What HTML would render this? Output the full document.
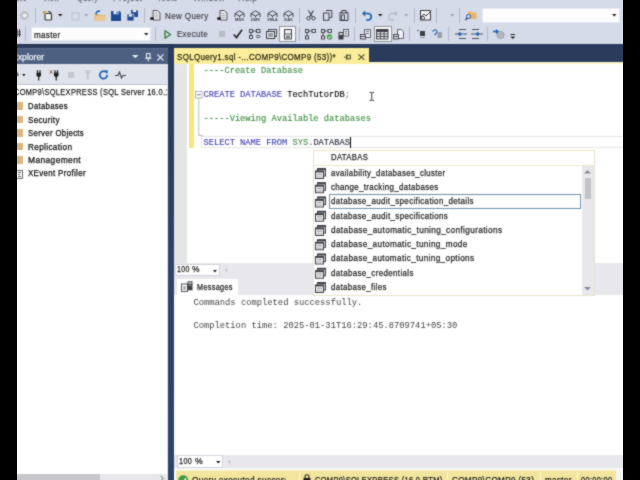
<!DOCTYPE html>
<html><head><meta charset="utf-8">
<style>
*{margin:0;padding:0;box-sizing:border-box}
html,body{width:640px;height:480px;overflow:hidden;background:#fff}
body{position:relative;font-family:"Liberation Sans",sans-serif;font-size:8.6px;color:#1e1e1e}
.a{position:absolute}
.t{position:absolute;white-space:pre;line-height:1;-webkit-text-stroke:0.25px currentColor}
.m{position:absolute;white-space:pre;line-height:1;font-family:"Liberation Mono",monospace}
svg{position:absolute;overflow:visible}
.sep{position:absolute;width:1px;background:#b2b9c7}
#root{position:absolute;left:0;top:0;width:640px;height:480px;overflow:hidden;filter:url(#sb)}
</style></head><body><svg width="0" height="0" style="position:absolute"><filter id="sb" x="0" y="0" width="100%" height="100%" color-interpolation-filters="sRGB"><feConvolveMatrix order="3" kernelMatrix="1 2 1 2 12 2 1 2 1" divisor="24" edgeMode="duplicate"/></filter></svg><div id="root">

<!-- ===== TOOLBAR ===== -->
<div class="a" style="left:0;top:0;width:640px;height:44px;background:#d6dbe9"></div>
<!-- menu remnants -->
<div id="menu"></div>

<!-- row1 -->
<div id="tb1">
<!-- nav forward (disabled) -->
<svg style="left:20px;top:11px" width="9" height="9"><circle cx="4.5" cy="4.5" r="4.2" fill="#b4b8c0"/><circle cx="4.5" cy="4.5" r="2.6" fill="#d2d6de"/><path d="M2.5 4.5h3.5M4.5 3l1.5 1.5L4.5 6" fill="none" stroke="#f4f5f8" stroke-width="1.1"/></svg>
<div class="sep" style="left:35px;top:8px;height:15px"></div>
<!-- new project -->
<svg style="left:42px;top:10px" width="11" height="11"><rect x="3" y="3.5" width="6.5" height="6.5" fill="#eef0f4" stroke="#3a3a3a" stroke-width="1.2" rx="1"/><path d="M6 1.5c1.5 0 3 1 3 2.5" fill="none" stroke="#3a3a3a" stroke-width="1.2"/><circle cx="2.5" cy="2.5" r="1.8" fill="#c9a94a"/></svg>
<svg style="left:58px;top:14px" width="5" height="3"><path d="M0 0h4.5L2.25 2.5z" fill="#1e1e1e"/></svg>
<!-- add item disabled -->
<svg style="left:71px;top:11px" width="9" height="10"><rect x="1" y="2" width="7" height="7" fill="none" stroke="#b9bdc5" stroke-width="1"/><path d="M0 1h3" stroke="#c8ccd4"/></svg>
<svg style="left:84px;top:14px" width="5" height="3"><path d="M0 0h4.5L2.25 2.5z" fill="#a3a7af"/></svg>
<!-- open -->
<svg style="left:94px;top:10px" width="12" height="11"><path d="M0.5 4h4l1 1h6v5.5h-11z" fill="#dfb56e"/><path d="M0.5 6h11v4.5h-11z" fill="#ebc98c"/><path d="M2 4.5c0-2.5 1.5-3.5 3.5-3.5" fill="none" stroke="#1b61b5" stroke-width="1.4"/><path d="M4.5 0l2 1-2 1.3z" fill="#1b61b5"/></svg>
<!-- save -->
<svg style="left:111px;top:11px" width="10" height="10"><path d="M0 0h8.5l1.5 1.5v8.5h-10z" fill="#1f4a92"/><rect x="2.5" y="0" width="5" height="3.2" fill="#e8ecf5"/><rect x="5.3" y="0.6" width="1.2" height="2" fill="#1f4a92"/></svg>
<!-- save all -->
<svg style="left:127px;top:10px" width="11" height="11"><path d="M4 0h6l1 1v6h-7z" fill="#1f4a92"/><rect x="5.8" y="0" width="3.4" height="2.2" fill="#e8ecf5"/><path d="M0 4h6l1 1v6h-7z" fill="#1f4a92" stroke="#d6dbe9" stroke-width="0.8"/><rect x="1.8" y="4.4" width="3.4" height="2.2" fill="#e8ecf5"/></svg>
<div class="sep" style="left:144px;top:8px;height:15px"></div>
<!-- new query -->
<svg style="left:150px;top:10px" width="11" height="11"><path d="M3 0.5h4.5l2.5 2.5v7h-7z" fill="#e9ebef" stroke="#55575c" stroke-width="1"/><path d="M4.5 3h3M4.5 5h4M4.5 7h4" stroke="#9a9ca2" stroke-width="0.8"/><ellipse cx="2" cy="8.5" rx="2" ry="1.6" fill="#1e1e1e"/></svg>
<!-- query doc -->
<svg style="left:217px;top:10px" width="11" height="11"><path d="M3 0.5h4.5l2.5 2.5v7h-7z" fill="#e9ebef" stroke="#55575c" stroke-width="1"/><path d="M4.5 3.5h3M4.5 5.5h4M4.5 7.5h4" stroke="#9a9ca2" stroke-width="0.8"/><ellipse cx="2" cy="8.5" rx="2" ry="1.6" fill="#1e1e1e"/></svg>
<!-- MDX DMX XMLA DAX cube icons -->
<svg style="left:234px;top:10px" width="11" height="11"><path d="M1 3.5L5.5 0.8 10 3.5v3.5M1 3.5v3.5M1 3.5l4.5 2.5L10 3.5M5.5 6v1.5" fill="none" stroke="#3f4247" stroke-width="1"/><text x="5.5" y="10.8" font-size="4" font-family="Liberation Sans" font-weight="bold" text-anchor="middle" fill="#3a3d42">MDX</text></svg>
<svg style="left:250px;top:10px" width="11" height="11"><path d="M1 3.5L5.5 0.8 10 3.5v3.5M1 3.5v3.5M1 3.5l4.5 2.5L10 3.5M5.5 6v1.5" fill="none" stroke="#3f4247" stroke-width="1"/><text x="5.5" y="10.8" font-size="4" font-family="Liberation Sans" font-weight="bold" text-anchor="middle" fill="#3a3d42">DMX</text></svg>
<svg style="left:267px;top:10px" width="11" height="11"><path d="M1 3.5L5.5 0.8 10 3.5v3.5M1 3.5v3.5M1 3.5l4.5 2.5L10 3.5M5.5 6v1.5" fill="none" stroke="#3f4247" stroke-width="1"/><text x="5.5" y="10.8" font-size="3.7" font-family="Liberation Sans" font-weight="bold" text-anchor="middle" fill="#3a3d42">XMLA</text></svg>
<svg style="left:283px;top:10px" width="11" height="11"><path d="M1 3.5L5.5 0.8 10 3.5v3.5M1 3.5v3.5M1 3.5l4.5 2.5L10 3.5M5.5 6v1.5" fill="none" stroke="#3f4247" stroke-width="1"/><text x="5.5" y="10.8" font-size="4" font-family="Liberation Sans" font-weight="bold" text-anchor="middle" fill="#3a3d42">DAX</text></svg>
<div class="sep" style="left:299px;top:8px;height:15px"></div>
<!-- cut -->
<svg style="left:306px;top:10px" width="10" height="11"><path d="M2.5 0.5L6.5 7M7.5 0.5L3.5 7" stroke="#3c3f44" stroke-width="1.1" fill="none"/><circle cx="2.5" cy="8.3" r="1.7" fill="none" stroke="#3c3f44" stroke-width="1"/><circle cx="7.5" cy="8.3" r="1.7" fill="none" stroke="#3c3f44" stroke-width="1"/></svg>
<!-- copy -->
<svg style="left:323px;top:10px" width="10" height="11"><rect x="0.5" y="3" width="5.5" height="7.2" fill="none" stroke="#3c3f44" stroke-width="1"/><path d="M3 0.5h5.8v7h-2.3" fill="none" stroke="#3c3f44" stroke-width="1"/></svg>
<!-- paste -->
<svg style="left:339px;top:10px" width="10" height="11"><path d="M1 2.5h8v8h-8z" fill="none" stroke="#3c3f44" stroke-width="1"/><rect x="3" y="0.5" width="4" height="2.5" fill="#d6dbe9" stroke="#3c3f44" stroke-width="1"/><rect x="2.5" y="5" width="3" height="5" fill="none" stroke="#3c3f44" stroke-width="0.9"/></svg>
<div class="sep" style="left:355px;top:8px;height:15px"></div>
<!-- undo -->
<svg style="left:362px;top:10px" width="10" height="11"><path d="M2 3.5h4a3 3 0 0 1 0 6.5H4" fill="none" stroke="#1c5eae" stroke-width="1.6"/><path d="M0 3.5L3.2 0.5v6z" fill="#1c5eae"/></svg>
<svg style="left:378px;top:14px" width="5" height="3"><path d="M0 0h4.5L2.25 2.5z" fill="#1e1e1e"/></svg>
<!-- redo disabled -->
<svg style="left:388px;top:10px" width="10" height="11"><path d="M8 3.5H4a3 3 0 0 0 0 6.5h2" fill="none" stroke="#b8bcc4" stroke-width="1.4"/><path d="M10 3.5L6.8 0.5v6z" fill="#b8bcc4"/></svg>
<svg style="left:404px;top:14px" width="5" height="3"><path d="M0 0h4.5L2.25 2.5z" fill="#a3a7af"/></svg>
<div class="sep" style="left:414px;top:8px;height:15px"></div>
<!-- activity monitor -->
<svg style="left:420px;top:10px" width="11" height="11"><rect x="0.5" y="0.5" width="10" height="9.5" fill="#eef0f5" stroke="#3c3f44" stroke-width="1"/><path d="M1 7l3-3 2 2 4-4" fill="none" stroke="#3c3f44" stroke-width="1"/><circle cx="3" cy="8" r="1.6" fill="#eef0f5" stroke="#3c3f44" stroke-width="0.9"/></svg>
<div class="sep" style="left:436px;top:8px;height:15px"></div>
<svg style="left:450px;top:14px" width="5" height="3"><path d="M0 0h4.5L2.25 2.5z" fill="#9ea2aa"/></svg>
<div class="sep" style="left:459px;top:8px;height:15px"></div>
<!-- find in files -->
<svg style="left:465px;top:10px" width="12" height="11"><path d="M3 1.5h3.5l1 1h4v6.5h-8.5z" fill="#e7b564"/><circle cx="3.5" cy="6.5" r="2" fill="#d6e2f2" stroke="#1b4f94" stroke-width="1"/><path d="M2.2 8L0.5 10" stroke="#1b4f94" stroke-width="1.4"/></svg>
<!-- find combo -->
<div class="a" style="left:482px;top:8px;width:138px;height:15px;background:#fdfdfd;border:1px solid #e6e9f0"></div>
<svg style="left:612px;top:14px" width="5" height="3"><path d="M0 0h4.5L2.25 2.5z" fill="#1e1e1e"/></svg>
</div>
<!-- row2 -->
<div id="tb2">
<svg style="left:16px;top:28px" width="5" height="10"><path d="M1 1v8M3.5 1v8M0 4h5M0 6.5h5" stroke="#3c3f44" stroke-width="1"/></svg>
<div class="sep" style="left:25px;top:27px;height:14px"></div>
<!-- master combo -->
<div class="a" style="left:31px;top:27px;width:120px;height:14px;background:#fdfdfd;border:1px solid #e3e6ee"></div>
<svg style="left:143.5px;top:33px" width="5" height="3"><path d="M0 0h4.5L2.25 2.5z" fill="#1e1e1e"/></svg>
<div class="sep" style="left:155px;top:27px;height:14px"></div>
<!-- execute -->
<svg style="left:164px;top:30px" width="8" height="9"><path d="M1 0.8v7.4L6.6 4.5z" fill="none" stroke="#2f7a34" stroke-width="1.3" stroke-linejoin="round"/></svg>
<!-- stop disabled -->
<div class="a" style="left:219px;top:31px;width:6px;height:6px;background:#b7bbc4"></div>
<!-- parse check -->
<svg style="left:233px;top:29px" width="10" height="10"><path d="M0.8 5.5L3.5 8.5 9 0.8" fill="none" stroke="#2b2b2e" stroke-width="1.8"/></svg>
<!-- estimated plan -->
<svg style="left:249px;top:29px" width="12" height="10"><rect x="0.5" y="0.5" width="3" height="3" fill="none" stroke="#3c3f44" stroke-width="0.9"/><rect x="7.5" y="0.5" width="3.5" height="3" fill="none" stroke="#3c3f44" stroke-width="0.9"/><path d="M3.5 2h4M2 3.5v3" stroke="#3c3f44" stroke-width="0.9"/><rect x="0.5" y="6.5" width="3" height="3" fill="none" stroke="#3c3f44" stroke-width="0.9"/><ellipse cx="9.2" cy="7.5" rx="1.8" ry="1.2" fill="none" stroke="#3c3f44" stroke-width="0.9"/></svg>
<!-- results stack -->
<svg style="left:266px;top:29px" width="11" height="10"><rect x="2.5" y="0.5" width="8" height="7" fill="#d6dbe9" stroke="#3c3f44" stroke-width="0.9"/><rect x="0.5" y="2.5" width="8" height="7" fill="#e9ecf2" stroke="#3c3f44" stroke-width="1"/><path d="M2 5h5M2 7h5" stroke="#3c3f44" stroke-width="0.9"/></svg>
<!-- pressed button -->
<div class="a" style="left:279px;top:26px;width:17px;height:16px;background:#fbfcfd;border:1px solid #8e939c"></div>
<svg style="left:284px;top:29px" width="8" height="11"><rect x="0.5" y="0.5" width="7" height="9.5" fill="#eceef2" stroke="#3c3f44" stroke-width="1"/><path d="M0.5 5h7" stroke="#3c3f44" stroke-width="0.8"/><rect x="2" y="6.5" width="4" height="2.5" fill="#7a7d83"/></svg>
<div class="sep" style="left:299px;top:27px;height:14px"></div>
<!-- actual plan -->
<svg style="left:305px;top:29px" width="11" height="11"><rect x="0.5" y="0.5" width="3" height="3" fill="none" stroke="#3c3f44" stroke-width="0.9"/><rect x="7" y="0.5" width="3.5" height="3" fill="none" stroke="#3c3f44" stroke-width="0.9"/><path d="M3.5 2h3.5M2 3.5v3.5" stroke="#3c3f44" stroke-width="0.9"/><rect x="0.5" y="7" width="3" height="3" fill="none" stroke="#3c3f44" stroke-width="0.9"/></svg>
<!-- live stats -->
<svg style="left:321px;top:29px" width="12" height="11"><rect x="0.5" y="0.5" width="3" height="3" fill="none" stroke="#3c3f44" stroke-width="0.9"/><rect x="7" y="0.5" width="3.5" height="3" fill="none" stroke="#3c3f44" stroke-width="0.9"/><path d="M3.5 2h3.5M2 3.5v3.5" stroke="#3c3f44" stroke-width="0.9"/><rect x="0.5" y="7" width="3" height="3" fill="none" stroke="#3c3f44" stroke-width="0.9"/><circle cx="8.5" cy="8" r="2.8" fill="#4a9c4a"/><path d="M7 8l1.2 1.2 2-2.2" stroke="#fff" stroke-width="0.9" fill="none"/></svg>
<!-- client stats -->
<svg style="left:338px;top:29px" width="11" height="11"><rect x="0.5" y="3" width="5" height="7.5" fill="#3a3d42"/><rect x="1.5" y="4" width="3" height="2" fill="#d6dbe9"/><rect x="5.5" y="0.5" width="5" height="6.5" fill="#e6e9ef" stroke="#55585e" stroke-width="0.9"/><path d="M7 2.5h2M7 4.5h2" stroke="#55585e" stroke-width="0.8"/></svg>
<div class="sep" style="left:354px;top:27px;height:14px"></div>
<!-- results to text -->
<svg style="left:360px;top:29px" width="12" height="11"><path d="M4.5 0.5h6v8h-6z" fill="#e9ecf2" stroke="#55585e" stroke-width="0.9"/><path d="M6 2.5h3M6 4.5h3" stroke="#55585e" stroke-width="0.8"/><rect x="0.5" y="5.5" width="5" height="4.5" fill="#d6dbe9" stroke="#3c3f44" stroke-width="0.9"/><path d="M0.5 7.5h5" stroke="#3c3f44" stroke-width="0.8"/></svg>
<!-- pressed grid -->
<div class="a" style="left:374px;top:26px;width:18px;height:16px;background:#fbfcfd;border:1px solid #8e939c"></div>
<svg style="left:376px;top:29px" width="13" height="11"><rect x="0.5" y="0.5" width="11.5" height="9.5" fill="#eceef2" stroke="#3c3f44" stroke-width="1"/><rect x="0.5" y="0.5" width="11.5" height="2.5" fill="#3c3f44"/><path d="M0.5 5h11.5M0.5 7.5h11.5M4.3 3v7M8.1 3v7" stroke="#3c3f44" stroke-width="0.9"/></svg>
<!-- results to file -->
<svg style="left:393px;top:29px" width="12" height="11"><path d="M4.5 0.5h4l2 2v7h-6z" fill="#eef0f4" stroke="#55585e" stroke-width="0.9"/><rect x="0.5" y="5.5" width="5" height="4.5" fill="#d6dbe9" stroke="#3c3f44" stroke-width="0.9"/><path d="M0.5 7.5h5" stroke="#3c3f44" stroke-width="0.8"/></svg>
<div class="sep" style="left:409px;top:27px;height:14px"></div>
<!-- comment -->
<svg style="left:417px;top:29px" width="9" height="10"><path d="M0 1.5h2" stroke="#6b6e74" stroke-width="1"/><rect x="3" y="2" width="5" height="5" fill="#3c3f44"/><path d="M3 8.5h5" stroke="#9a9da3" stroke-width="1"/></svg>
<!-- uncomment -->
<svg style="left:432px;top:29px" width="11" height="10"><path d="M1 3a2 2 0 1 1 3 1.5L2.5 6" fill="none" stroke="#1c5eae" stroke-width="1.1"/><path d="M5.5 4h4.5M5.5 6h4.5M5.5 8h4.5" stroke="#55585e" stroke-width="0.9"/></svg>
<div class="sep" style="left:448px;top:27px;height:14px"></div>
<!-- decrease indent -->
<svg style="left:455px;top:29px" width="12" height="10"><path d="M4 0.5h7M0 5h3M8 5h4M4 9.5h7" stroke="#3c3f44" stroke-width="0.9"/><path d="M7.5 5H3.5M5.3 3.2L3.5 5l1.8 1.8" fill="none" stroke="#1c5eae" stroke-width="1.3"/></svg>
<!-- increase indent -->
<svg style="left:471px;top:29px" width="12" height="10"><path d="M1 0.5h7M0 5h3M8.5 5h3.5M1 9.5h7" stroke="#3c3f44" stroke-width="0.9"/><path d="M3.5 5h4.5M6.2 3.2L8 5 6.2 6.8" fill="none" stroke="#1c5eae" stroke-width="1.3"/></svg>
<div class="sep" style="left:487px;top:27px;height:14px"></div>
<!-- specify values -->
<svg style="left:493px;top:29px" width="12" height="11"><circle cx="7.5" cy="6" r="3.6" fill="#c5cad4" stroke="#8a8e96" stroke-width="0.9"/><circle cx="7.5" cy="6" r="1.5" fill="none" stroke="#8a8e96" stroke-width="0.8"/><path d="M0 2.5h4.5M3 0.8L5 2.5 3 4.2" fill="none" stroke="#1c5eae" stroke-width="1.3"/></svg>
<svg style="left:510px;top:34px" width="6" height="6"><path d="M0.5 0.5h4.5" stroke="#1e1e1e" stroke-width="0.9"/><path d="M0.3 2.5h5L2.8 5z" fill="#1e1e1e"/></svg>
</div>

<!-- navy env background -->
<div class="a" style="left:0;top:44px;width:640px;height:4px;background:#2a3b5c"></div>
<div class="a" style="left:0;top:44px;width:640px;height:1px;background:#222e4a"></div>

<!-- ===== EXPLORER ===== -->
<div id="explorer">
<div class="a" style="left:0;top:48px;width:168px;height:432px;background:#fff"></div>
<div class="a" style="left:0;top:48px;width:169px;height:16px;background:#4d6082"></div>
<div class="a" style="left:0;top:48px;width:168px;height:1px;background:#5e6f90"></div>
<div class="a" style="left:0;top:64px;width:168px;height:20px;background:#dfe3ec"></div>
<div class="a" style="left:0;top:84px;width:168px;height:1px;background:#bcc3cf"></div>
<div class="a" style="left:167px;top:84px;width:1px;height:396px;background:#e3e6ec"></div>
</div>

<!-- navy vertical gap -->
<div class="a" style="left:168px;top:48px;width:6px;height:432px;background:linear-gradient(#2a3b5c,#2c4266 50%,#2c4468)"></div>

<!-- ===== EDITOR ===== -->
<div id="editor">
<div class="a" style="left:174px;top:44px;width:466px;height:18px;background:#2a3b5c"></div>
<div class="a" style="left:174px;top:62px;width:466px;height:2px;background:#fff6c4"></div>
<div class="a" style="left:174px;top:48px;width:195px;height:16px;background:#fbed9c"></div>
<div class="a" style="left:174px;top:64px;width:466px;height:199px;background:#fff"></div>
<div class="a" style="left:174px;top:64px;width:13px;height:199px;background:#e4e6e6"></div>
<div class="a" style="left:188.5px;top:64px;width:5px;height:84px;background:#f6e584"></div>
</div>

<!-- ===== RESULTS ===== -->
<div id="results">
<div class="a" style="left:174px;top:263px;width:466px;height:16px;background:#e8e8ec"></div>
<div class="a" style="left:174px;top:279px;width:466px;height:16px;background:#e8e8ec"></div>
<div class="a" style="left:177px;top:279px;width:61px;height:17px;background:#fff"></div>
<div class="a" style="left:174px;top:295px;width:466px;height:160px;background:#fff"></div>
<div class="a" style="left:174px;top:455px;width:466px;height:13px;background:#e8e8ec"></div>
<div class="a" style="left:176px;top:470px;width:440px;height:10px;background:linear-gradient(#f8f0c4 0,#f8f0c4 1px,#f2e59e 1px)"></div>
</div>

<!-- explorer header icons -->
<svg style="left:132px;top:55px" width="7" height="4"><path d="M0 0h6.6L3.3 3.2z" fill="#e6eaf2"/></svg>
<svg style="left:144.5px;top:53px" width="7" height="9"><path d="M1.5 0.5h3.5v4.5h-3.5z" fill="none" stroke="#e6eaf2" stroke-width="1.1"/><path d="M0 5.3h6.5M3.25 5.3v3.2" stroke="#e6eaf2" stroke-width="1.1"/></svg>
<svg style="left:157px;top:53.5px" width="7" height="7"><path d="M0.3 0.3l6.2 6.2M6.5 0.3L0.3 6.5" stroke="#e6eaf2" stroke-width="1.2"/></svg>

<!-- explorer toolbar icons -->
<svg style="left:16px;top:70px" width="4" height="10"><path d="M0 1l2 3-2 3M1 5h2" stroke="#3c3f44" stroke-width="1" fill="none"/></svg>
<svg style="left:22px;top:73.5px" width="4" height="3"><path d="M0 0h3.6L1.8 2.2z" fill="#1e1e1e"/></svg>
<svg style="left:35.5px;top:69.5px" width="6" height="11"><path d="M1.5 0.3v2.4M4 0.3v2.4" stroke="#1e1e1e" stroke-width="1.2"/><path d="M0.5 2.6h4.5v3L3.6 7H1.9L0.5 5.6z" fill="#1e1e1e"/><path d="M2.75 6.5v4" stroke="#1e1e1e" stroke-width="1.2"/></svg>
<svg style="left:48.5px;top:69.5px" width="11" height="11"><path d="M0.5 0.5l3.2 3M3.7 0.5L0.5 3.5" stroke="#8a5a3a" stroke-width="0.9"/><path d="M6 0.3v2.4M8.5 0.3v2.4" stroke="#1e1e1e" stroke-width="1.2"/><path d="M5 2.6h4.5v3L8.1 7H6.4L5 5.6z" fill="#1e1e1e"/><path d="M7.25 6.5v4" stroke="#1e1e1e" stroke-width="1.2"/></svg>
<div class="a" style="left:68px;top:72px;width:6px;height:6px;background:#c3c7cf"></div>
<svg style="left:83.5px;top:70px" width="8" height="10"><path d="M0 0.5h7.5L4.8 4v5.5H2.7V4z" fill="#c3c7cf"/></svg>
<svg style="left:99px;top:70px" width="10" height="10"><path d="M8.2 5a3.7 3.7 0 1 1-1.6-3.1" fill="none" stroke="#1c5eae" stroke-width="1.7"/><path d="M5 0.2L9 0.4 8.2 4.3z" fill="#1c5eae"/></svg>
<svg style="left:115px;top:71px" width="11" height="8"><path d="M0 4.5h3l1.5-3.5 2 6 1.5-2.5h3" fill="none" stroke="#3c3f44" stroke-width="1.1"/></svg>

<!-- tree icons -->
<div class="a" style="left:0;top:102px;width:23px;height:7.5px;background:#dcb67a"></div>
<div class="a" style="left:0;top:115.5px;width:23px;height:7.5px;background:#dcb67a"></div>
<div class="a" style="left:0;top:129px;width:23px;height:7.5px;background:#dcb67a"></div>
<div class="a" style="left:0;top:142.5px;width:23px;height:7.5px;background:#dcb67a"></div>
<div class="a" style="left:0;top:156px;width:23px;height:7.5px;background:#dcb67a"></div>
<svg style="left:14px;top:169.5px" width="9" height="9"><rect x="0.5" y="0.5" width="8" height="8" fill="#fff" stroke="#55585e" stroke-width="0.9"/><path d="M4 2.5h3M4 4.5h2M4 6.5h3" stroke="#3c3f44" stroke-width="0.8"/></svg>

<!-- explorer bottom scrollbar -->
<div class="a" style="left:0;top:474px;width:167px;height:6px;background:#e8e8ec"></div>
<div class="a" style="left:0;top:474px;width:100px;height:6px;background:#c6c6cc"></div>
<svg style="left:160px;top:476px" width="4" height="5"><path d="M0.5 0l3 2.5-3 2.5" fill="none" stroke="#707074" stroke-width="1"/></svg>

<!-- editor tab pin / close -->
<svg style="left:344px;top:54px" width="7" height="6"><path d="M0 3.2h2.2" stroke="#4a4628" stroke-width="0.9"/><rect x="2.9" y="1.2" width="3.4" height="3.6" fill="none" stroke="#4a4628" stroke-width="1"/><path d="M2.6 0.5v5.4" stroke="#4a4628" stroke-width="0.9"/></svg>
<svg style="left:358px;top:53.5px" width="7" height="6"><path d="M0.4 0.3l6 5.6M6.4 0.3l-6 5.6" stroke="#4a4628" stroke-width="1.1"/></svg>

<!-- fold margin -->
<svg style="left:194.5px;top:91px" width="9" height="46"><rect x="0.5" y="0.5" width="6.5" height="6.5" fill="#fff" stroke="#a8a8a8" stroke-width="0.9"/><path d="M2 3.75h3.5" stroke="#606060" stroke-width="0.9"/><path d="M3.75 7v37.5h4" fill="none" stroke="#b4b4b4" stroke-width="0.9"/></svg>

<!-- current line highlight -->
<div class="a" style="left:201px;top:136px;width:422px;height:12px;border:1px solid #e4e4e4;border-right:none"></div>

<!-- text caret -->
<div class="a" style="left:350px;top:137px;width:1px;height:11px;background:#000"></div>

<!-- I-beam mouse cursor -->
<svg style="left:368.5px;top:91.5px" width="6" height="10"><path d="M0.5 0.5h1.5l0.75 0.6 0.75-0.6h1.5M0.5 8.5h1.5l0.75-0.6 0.75 0.6h1.5M2.75 1v7" fill="none" stroke="#222" stroke-width="0.9"/></svg>

<!-- ===== autocomplete popup ===== -->
<div class="a" style="left:313px;top:150px;width:282px;height:145.5px;background:#fff;border:1px solid #e9e3c8"></div>
<div class="a" style="left:314px;top:165px;width:280px;height:1px;background:#ece7d0"></div>
<!-- scrollbar -->
<div class="a" style="left:582px;top:166px;width:12px;height:128.5px;background:#e8e8ec"></div>
<svg style="left:584px;top:170px" width="8" height="4"><path d="M0 3.5L3.5 0 7 3.5z" fill="#868999"/></svg>
<div class="a" style="left:585px;top:178px;width:6px;height:21px;background:#c2c3c9"></div>
<svg style="left:584px;top:286.5px" width="8" height="4"><path d="M0 0h7L3.5 3.5z" fill="#868999"/></svg>
<!-- selection -->
<div class="a" style="left:329px;top:194px;width:252px;height:14.5px;border:1px solid #6d8fa9"></div>
<!-- item icons -->
<svg style="left:315px;top:168px" width="11" height="125">
<defs><g id="tic"><rect x="2.5" y="0.5" width="8" height="7.5" fill="#cfcfd2" stroke="#3c3f44" stroke-width="1"/><rect x="2.5" y="0.3" width="8" height="1.6" fill="#3c3f44"/><rect x="0.5" y="3" width="8" height="7.5" fill="#f6f6f6" stroke="#3c3f44" stroke-width="1"/><rect x="0.5" y="2.8" width="8" height="1.6" fill="#3c3f44"/><path d="M2 6.2h5" stroke="#8d8f94" stroke-width="1"/><rect x="1.3" y="7.6" width="6.4" height="2.2" fill="#c9cacd"/></g></defs>
<use href="#tic" y="0"/><use href="#tic" y="14.25"/><use href="#tic" y="28.5"/><use href="#tic" y="42.75"/><use href="#tic" y="57"/><use href="#tic" y="71.25"/><use href="#tic" y="85.5"/><use href="#tic" y="99.75"/><use href="#tic" y="114"/>
</svg>

<!-- ===== results area ===== -->
<div class="a" style="left:175px;top:263.5px;width:45px;height:12px;background:#fff;border:1px solid #d0d2d8"></div>
<svg style="left:213px;top:269.5px" width="5" height="3"><path d="M0 0h4L2 2.5z" fill="#1e1e1e"/></svg>
<svg style="left:224px;top:267px" width="4" height="6"><path d="M3.5 0L0.5 3l3 3z" fill="#c9c9cf"/></svg>
<svg style="left:180.5px;top:281px" width="12" height="11"><rect x="0.5" y="3" width="6" height="7.5" fill="#fff" stroke="#3c3f44" stroke-width="0.9"/><path d="M2 6h3M2 8h3" stroke="#3c3f44" stroke-width="0.8"/><rect x="6.5" y="0.3" width="5" height="9" fill="#3c3f44"/><rect x="7.5" y="1.3" width="3" height="1.5" fill="#d7d9de"/><rect x="7.5" y="3.8" width="3" height="1.2" fill="#8b8e95"/></svg>

<div class="a" style="left:177px;top:455px;width:46px;height:12.5px;background:#fff;border:1px solid #d0d2d8"></div>
<svg style="left:215.5px;top:461px" width="5" height="3"><path d="M0 0h4.5L2.25 2.5z" fill="#1e1e1e"/></svg>
<svg style="left:227px;top:458.5px" width="4" height="6"><path d="M3.5 0L0.5 3l3 3z" fill="#c9c9cf"/></svg>

<!-- status bar -->
<div class="a" style="left:174px;top:468px;width:449px;height:2px;background:#f8f8f8"></div>
<svg style="left:178px;top:474.5px" width="11" height="11"><circle cx="5.25" cy="5.25" r="5" fill="#3f9a3f"/><path d="M2.8 5.5l1.8 1.8 3.6-4" stroke="#fff" stroke-width="1.3" fill="none"/></svg>
<div class="a" style="left:299px;top:472px;width:1px;height:8px;background:#fdf8d8"></div>
<svg style="left:303px;top:474px" width="8" height="9"><path d="M2 4V2.8a2 2 0 0 1 4 0V4" fill="none" stroke="#1e1e1e" stroke-width="1.1"/><rect x="0.5" y="4" width="7" height="5" fill="#1e1e1e"/></svg>
<div class="a" style="left:447px;top:472px;width:1px;height:8px;background:#fdf8d8"></div>
<div class="a" style="left:539.5px;top:472px;width:1px;height:8px;background:#fdf8d8"></div>
<div class="a" style="left:576.5px;top:472px;width:1px;height:8px;background:#fdf8d8"></div>
<div class="a" style="left:616px;top:470px;width:7px;height:10px;background:#f4f4f6"></div>

<div class="t" style="left:5.00px;top:-6.96px;font-size:9.4px;color:#747982;letter-spacing:0.4px;transform:scaleX(1.2093);transform-origin:0 0;">Edit</div>
<div class="t" style="left:43.00px;top:-6.96px;font-size:9.4px;color:#747982;letter-spacing:0.4px;transform:scaleX(0.7489);transform-origin:0 0;">View</div>
<div class="t" style="left:77.00px;top:-6.96px;font-size:9.4px;color:#747982;letter-spacing:0.4px;transform:scaleX(0.7740);transform-origin:0 0;">Query</div>
<div class="t" style="left:113.00px;top:-6.96px;font-size:9.4px;color:#747982;letter-spacing:0.4px;transform:scaleX(0.9182);transform-origin:0 0;">Project</div>
<div class="t" style="left:157.00px;top:-6.96px;font-size:9.4px;color:#747982;letter-spacing:0.4px;transform:scaleX(0.8514);transform-origin:0 0;">Tools</div>
<div class="t" style="left:193.00px;top:-6.96px;font-size:9.4px;color:#747982;letter-spacing:0.4px;transform:scaleX(0.8911);transform-origin:0 0;">Window</div>
<div class="t" style="left:238.00px;top:-6.96px;font-size:9.4px;color:#747982;letter-spacing:0.4px;transform:scaleX(0.9273);transform-origin:0 0;">Help</div>
<div class="t" style="left:164.60px;top:10.60px;font-size:9.8px;color:#3a3a3e;letter-spacing:0.4px;transform:scaleX(0.8274);transform-origin:0 0;-webkit-text-stroke:0.15px #3a3a3e;">New Query</div>
<div class="t" style="left:33.75px;top:29.54px;font-size:9.4px;color:#1e1e1e;letter-spacing:0.4px;transform:scaleX(0.8561);transform-origin:0 0;">master</div>
<div class="t" style="left:176.90px;top:28.60px;font-size:9.8px;color:#3a3a3e;letter-spacing:0.4px;transform:scaleX(0.8095);transform-origin:0 0;-webkit-text-stroke:0.15px #3a3a3e;">Execute</div>
<div class="t" style="left:11.90px;top:52.63px;font-size:9.0px;color:#eef1f6;transform:scaleX(0.9600);transform-origin:0 0;">Explorer</div>
<div class="a" style="left:0px;top:0;width:167px;height:480px;overflow:hidden"><div class="t" style="left:14.00px;top:88.08px;font-size:9.0px;color:#1e1e1e;letter-spacing:0.4px;transform:scaleX(0.8254);transform-origin:0 0;">COMP9\SQLEXPRESS (SQL Server 16.0.1600.1 - COMP9\COMP9)</div></div>
<div class="t" style="left:28.00px;top:102.24px;font-size:9.2px;color:#0a0a0a;letter-spacing:0.4px;transform:scaleX(0.8381);transform-origin:0 0;">Databases</div>
<div class="t" style="left:28.00px;top:115.67px;font-size:9.2px;color:#0a0a0a;letter-spacing:0.4px;transform:scaleX(0.8724);transform-origin:0 0;">Security</div>
<div class="t" style="left:28.00px;top:129.10px;font-size:9.2px;color:#0a0a0a;letter-spacing:0.4px;transform:scaleX(0.8450);transform-origin:0 0;">Server Objects</div>
<div class="t" style="left:28.00px;top:142.53px;font-size:9.2px;color:#0a0a0a;letter-spacing:0.4px;transform:scaleX(0.8896);transform-origin:0 0;">Replication</div>
<div class="t" style="left:28.00px;top:155.96px;font-size:9.2px;color:#0a0a0a;letter-spacing:0.4px;transform:scaleX(0.9189);transform-origin:0 0;">Management</div>
<div class="t" style="left:28.00px;top:169.39px;font-size:9.2px;color:#0a0a0a;letter-spacing:0.4px;transform:scaleX(0.8612);transform-origin:0 0;">XEvent Profiler</div>
<div class="t" style="left:177.00px;top:51.70px;font-size:9.8px;color:#2a2810;letter-spacing:0.4px;transform:scaleX(0.8144);transform-origin:0 0;-webkit-text-stroke:0.25px #2a2810;">SQLQuery1.sql -...COMP9\COMP9 (53))*</div>
<div class="m" style="left:203.50px;top:66.57px;font-size:8.72px;color:#3a8a3e;-webkit-text-stroke:0.1px currentColor;">----Create Database</div>
<div class="m" style="left:203.50px;top:90.57px;font-size:8.72px;color:#000000;-webkit-text-stroke:0.1px currentColor;"><span style="color:#3c3cae">CREATE DATABASE</span> TechTutorDB<span style="color:#808080">;</span></div>
<div class="m" style="left:203.50px;top:114.57px;font-size:8.72px;color:#3a8a3e;-webkit-text-stroke:0.1px currentColor;">-----Viewing Available databases</div>
<div class="m" style="left:203.50px;top:138.57px;font-size:8.72px;color:#000000;-webkit-text-stroke:0.1px currentColor;"><span style="color:#3c3cae">SELECT NAME FROM</span> <span style="color:#4a8a4e">SYS</span><span style="color:#606060">.</span><span style="color:#2a2c40">DATABAS</span></div>
<div class="t" style="left:330.60px;top:153.01px;font-size:9.2px;color:#1e1e1e;letter-spacing:0.4px;transform:scaleX(0.8400);transform-origin:0 0;">DATABAS</div>
<div class="t" style="left:330.60px;top:168.78px;font-size:9.0px;color:#1e1e1e;letter-spacing:0.4px;transform:scaleX(0.8698);transform-origin:0 0;">availability_databases_cluster</div>
<div class="t" style="left:330.60px;top:183.04px;font-size:9.0px;color:#1e1e1e;letter-spacing:0.4px;transform:scaleX(0.8781);transform-origin:0 0;">change_tracking_databases</div>
<div class="t" style="left:330.60px;top:197.30px;font-size:9.0px;color:#1e1e1e;letter-spacing:0.4px;transform:scaleX(0.8851);transform-origin:0 0;">database_audit_specification_details</div>
<div class="t" style="left:330.60px;top:211.56px;font-size:9.0px;color:#1e1e1e;letter-spacing:0.4px;transform:scaleX(0.8863);transform-origin:0 0;">database_audit_specifications</div>
<div class="t" style="left:330.60px;top:225.82px;font-size:9.0px;color:#1e1e1e;letter-spacing:0.4px;transform:scaleX(0.9133);transform-origin:0 0;">database_automatic_tuning_configurations</div>
<div class="t" style="left:330.60px;top:240.08px;font-size:9.0px;color:#1e1e1e;letter-spacing:0.4px;transform:scaleX(0.9104);transform-origin:0 0;">database_automatic_tuning_mode</div>
<div class="t" style="left:330.60px;top:254.34px;font-size:9.0px;color:#1e1e1e;letter-spacing:0.4px;transform:scaleX(0.9091);transform-origin:0 0;">database_automatic_tuning_options</div>
<div class="t" style="left:330.60px;top:268.60px;font-size:9.0px;color:#1e1e1e;letter-spacing:0.4px;transform:scaleX(0.8845);transform-origin:0 0;">database_credentials</div>
<div class="t" style="left:330.60px;top:282.86px;font-size:9.0px;color:#1e1e1e;letter-spacing:0.4px;transform:scaleX(0.8758);transform-origin:0 0;">database_files</div>
<div class="t" style="left:177.00px;top:265.22px;font-size:8.6px;color:#1e1e1e;letter-spacing:0.4px;transform:scaleX(0.8253);transform-origin:0 0;">100</div>
<div class="t" style="left:192.00px;top:265.22px;font-size:8.6px;color:#1e1e1e;letter-spacing:0.4px;transform:scaleX(0.9808);transform-origin:0 0;">%</div>
<div class="t" style="left:197.00px;top:282.89px;font-size:8.4px;color:#1e1e1e;letter-spacing:0.4px;transform:scaleX(0.8664);transform-origin:0 0;">Messages</div>
<div class="m" style="left:193.40px;top:299.25px;font-size:8.8px;color:#444444;">Commands completed successfully.</div>
<div class="m" style="left:193.40px;top:321.75px;font-size:8.8px;color:#444444;">Completion time: 2025-01-31T16:29:45.8709741+05:30</div>
<div class="t" style="left:179.40px;top:457.12px;font-size:8.6px;color:#1e1e1e;letter-spacing:0.4px;transform:scaleX(0.8451);transform-origin:0 0;">100</div>
<div class="t" style="left:194.80px;top:457.12px;font-size:8.6px;color:#1e1e1e;letter-spacing:0.4px;transform:scaleX(1.0069);transform-origin:0 0;">%</div>
<div class="a" style="left:0px;top:0;width:285.5px;height:480px;overflow:hidden"><div class="t" style="left:192.00px;top:476.08px;font-size:9.0px;color:#1e1e1e;letter-spacing:0.4px;transform:scaleX(0.9100);transform-origin:0 0;">Query executed successfully.</div></div>
<div class="t" style="left:315.00px;top:476.42px;font-size:8.6px;color:#1e1e1e;letter-spacing:0.4px;transform:scaleX(0.8670);transform-origin:0 0;">COMP9\SQLEXPRESS (16.0 RTM)</div>
<div class="t" style="left:451.80px;top:476.42px;font-size:8.6px;color:#1e1e1e;letter-spacing:0.4px;transform:scaleX(0.9393);transform-origin:0 0;">COMP9\COMP9 (53)</div>
<div class="t" style="left:545.00px;top:476.42px;font-size:8.6px;color:#1e1e1e;letter-spacing:0.4px;transform:scaleX(0.9373);transform-origin:0 0;">master</div>
<div class="t" style="left:581.00px;top:476.42px;font-size:8.6px;color:#1e1e1e;letter-spacing:0.4px;transform:scaleX(0.8550);transform-origin:0 0;">00:00:00</div>
</div>
<!-- black bars -->
<div class="a" style="left:0;top:0;width:17px;height:480px;background:#000"></div>
<div class="a" style="left:623px;top:0;width:17px;height:480px;background:#000"></div>
</body></html>
